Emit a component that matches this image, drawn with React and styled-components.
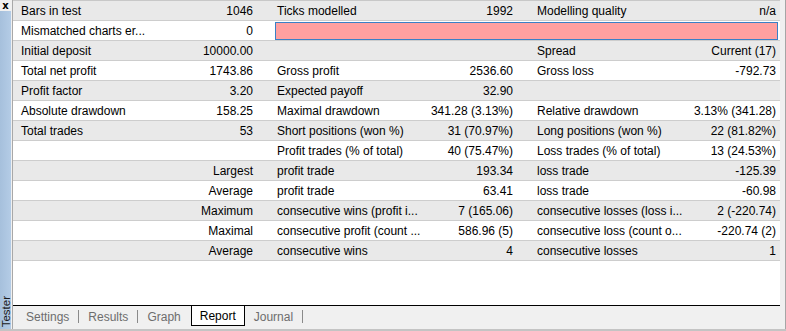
import React from "react";
import styled, { createGlobalStyle } from "styled-components";

const GlobalStyle = createGlobalStyle`
  html, body {
    margin: 0;
    padding: 0;
    background: #f0f0f0;
  }
  body {
    font-family: "Liberation Sans", Arial, sans-serif;
    font-size: 12px;
    color: #000;
  }
`;

const Window = styled.div`
  display: flex;
  width: 786px;
  height: 331px;
  box-sizing: border-box;
  border-bottom: 2px solid #c4c4c4;
  background: #f0f0f0;
  overflow: hidden;
`;

const Sidebar = styled.div`
  display: flex;
  flex-direction: column;
  width: 11px;
  flex-shrink: 0;
`;

const CloseBox = styled.div`
  height: 11px;
  display: flex;
  align-items: center;
  justify-content: center;
  background: #f0f0f0;
  font: bold 10px "DejaVu Sans", sans-serif;
  line-height: 10px;
  color: #000;
`;

const SideStrip = styled.div`
  flex: 1;
  display: flex;
  align-items: flex-end;
  justify-content: center;
  background: linear-gradient(to right, #a6c0dc, #b4cce6);
  padding-bottom: 2px;
`;

const SideLabel = styled.span`
  writing-mode: vertical-rl;
  transform: rotate(180deg);
  font-size: 11.5px;
  line-height: 12px;
  width: 11px;
  color: #1a1a1a;
`;

const Main = styled.div`
  display: flex;
  flex-direction: column;
  width: 769px;
  margin-left: 1px;
  border-left: 1px solid #a8a8a8;
  flex-shrink: 0;
`;

const Report = styled.div`
  flex: 1;
  background: #fff;
  border-top: 1px solid #c8c8c8;
  border-bottom: 1px solid #000;
  width: 767px;
`;

const Row = styled.div`
  display: grid;
  grid-template-columns: 244px 248px 251px;
  column-gap: 12px;
  height: 20px;
  box-sizing: border-box;
  border-bottom: 1px solid #cdcdcd;
  background: ${(p) => (p.$alt ? "#e9e9e9" : "#fff")};
  align-items: center;
`;

const Cell = styled.div`
  display: flex;
  justify-content: space-between;
  align-items: center;
  padding: 1px 4px 0 8px;
  white-space: nowrap;
  overflow: hidden;
`;

const Value = styled.span`
  text-align: right;
`;

const ErrorBar = styled.div`
  grid-column: 2 / 4;
  height: 18px;
  box-sizing: border-box;
  margin: 0 2px 0 6px;
  background: #ffa0a0;
  border: 1px solid #3a80c6;
`;

const TabBar = styled.div`
  display: flex;
  align-items: flex-start;
  height: 23px;
  padding-left: 4px;
  width: 767px;
`;

const Tab = styled.div`
  height: 19px;
  display: flex;
  align-items: center;
  padding: 0 8px;
  color: ${(p) => (p.$active ? "#000" : "#6d6d6d")};
  background: ${(p) => (p.$active ? "#fff" : "transparent")};
  border: 1px solid ${(p) => (p.$active ? "#000" : "transparent")};
  border-top: none;
  margin-top: ${(p) => (p.$active ? "0" : "1px")};
`;

const Sep = styled.span`
  width: 1px;
  height: 13px;
  margin-top: 4px;
  background: ${(p) => (p.$hidden ? "transparent" : "#8a8a8a")};
`;

const RightEdge = styled.div`
  flex: 1;
  display: flex;
`;

const EdgeLight = styled.div`
  width: 3px;
  background: #f0f0f0;
  border-right: 1px solid #a6a6a6;
`;

const EdgeDark = styled.div`
  flex: 1;
  background: linear-gradient(to bottom, #1d1d1d, #2a2b1c 60%, #1a1c2e);
`;

const rows = [
  [["Bars in test", "1046"], ["Ticks modelled", "1992"], ["Modelling quality", "n/a"]],
  [["Mismatched charts er...", "0"], "bar"],
  [["Initial deposit", "10000.00"], null, ["Spread", "Current (17)"]],
  [["Total net profit", "1743.86"], ["Gross profit", "2536.60"], ["Gross loss", "-792.73"]],
  [["Profit factor", "3.20"], ["Expected payoff", "32.90"], null],
  [["Absolute drawdown", "158.25"], ["Maximal drawdown", "341.28 (3.13%)"], ["Relative drawdown", "3.13% (341.28)"]],
  [["Total trades", "53"], ["Short positions (won %)", "31 (70.97%)"], ["Long positions (won %)", "22 (81.82%)"]],
  [null, ["Profit trades (% of total)", "40 (75.47%)"], ["Loss trades (% of total)", "13 (24.53%)"]],
  [["", "Largest"], ["profit trade", "193.34"], ["loss trade", "-125.39"]],
  [["", "Average"], ["profit trade", "63.41"], ["loss trade", "-60.98"]],
  [["", "Maximum"], ["consecutive wins (profit i...", "7 (165.06)"], ["consecutive losses (loss i...", "2 (-220.74)"]],
  [["", "Maximal"], ["consecutive profit (count ...", "586.96 (5)"], ["consecutive loss (count o...", "-220.74 (2)"]],
  [["", "Average"], ["consecutive wins", "4"], ["consecutive losses", "1"]],
];

const tabs = ["Settings", "Results", "Graph", "Report", "Journal"];
const activeTab = "Report";

function ReportCell({ data }) {
  if (!data) return <Cell />;
  return (
    <Cell>
      <span>{data[0]}</span>
      <Value>{data[1]}</Value>
    </Cell>
  );
}

export default function App() {
  const activeIndex = tabs.indexOf(activeTab);
  return (
    <>
      <GlobalStyle />
      <Window>
        <Sidebar>
          <CloseBox>x</CloseBox>
          <SideStrip>
            <SideLabel>Tester</SideLabel>
          </SideStrip>
        </Sidebar>
        <Main>
          <Report>
            {rows.map((row, i) => (
              <Row key={i} $alt={i % 2 === 0}>
                {row.map((cell, j) =>
                  cell === "bar" ? (
                    <ErrorBar key={j} />
                  ) : (
                    <ReportCell key={j} data={cell} />
                  )
                )}
              </Row>
            ))}
          </Report>
          <TabBar>
            {tabs.map((name, i) => (
              <React.Fragment key={name}>
                <Tab $active={name === activeTab}>{name}</Tab>
                {i !== activeIndex && (
                  <Sep $hidden={i + 1 === activeIndex} />
                )}
              </React.Fragment>
            ))}
          </TabBar>
        </Main>
        <RightEdge>
          <EdgeLight />
          <EdgeDark />
        </RightEdge>
      </Window>
    </>
  );
}
